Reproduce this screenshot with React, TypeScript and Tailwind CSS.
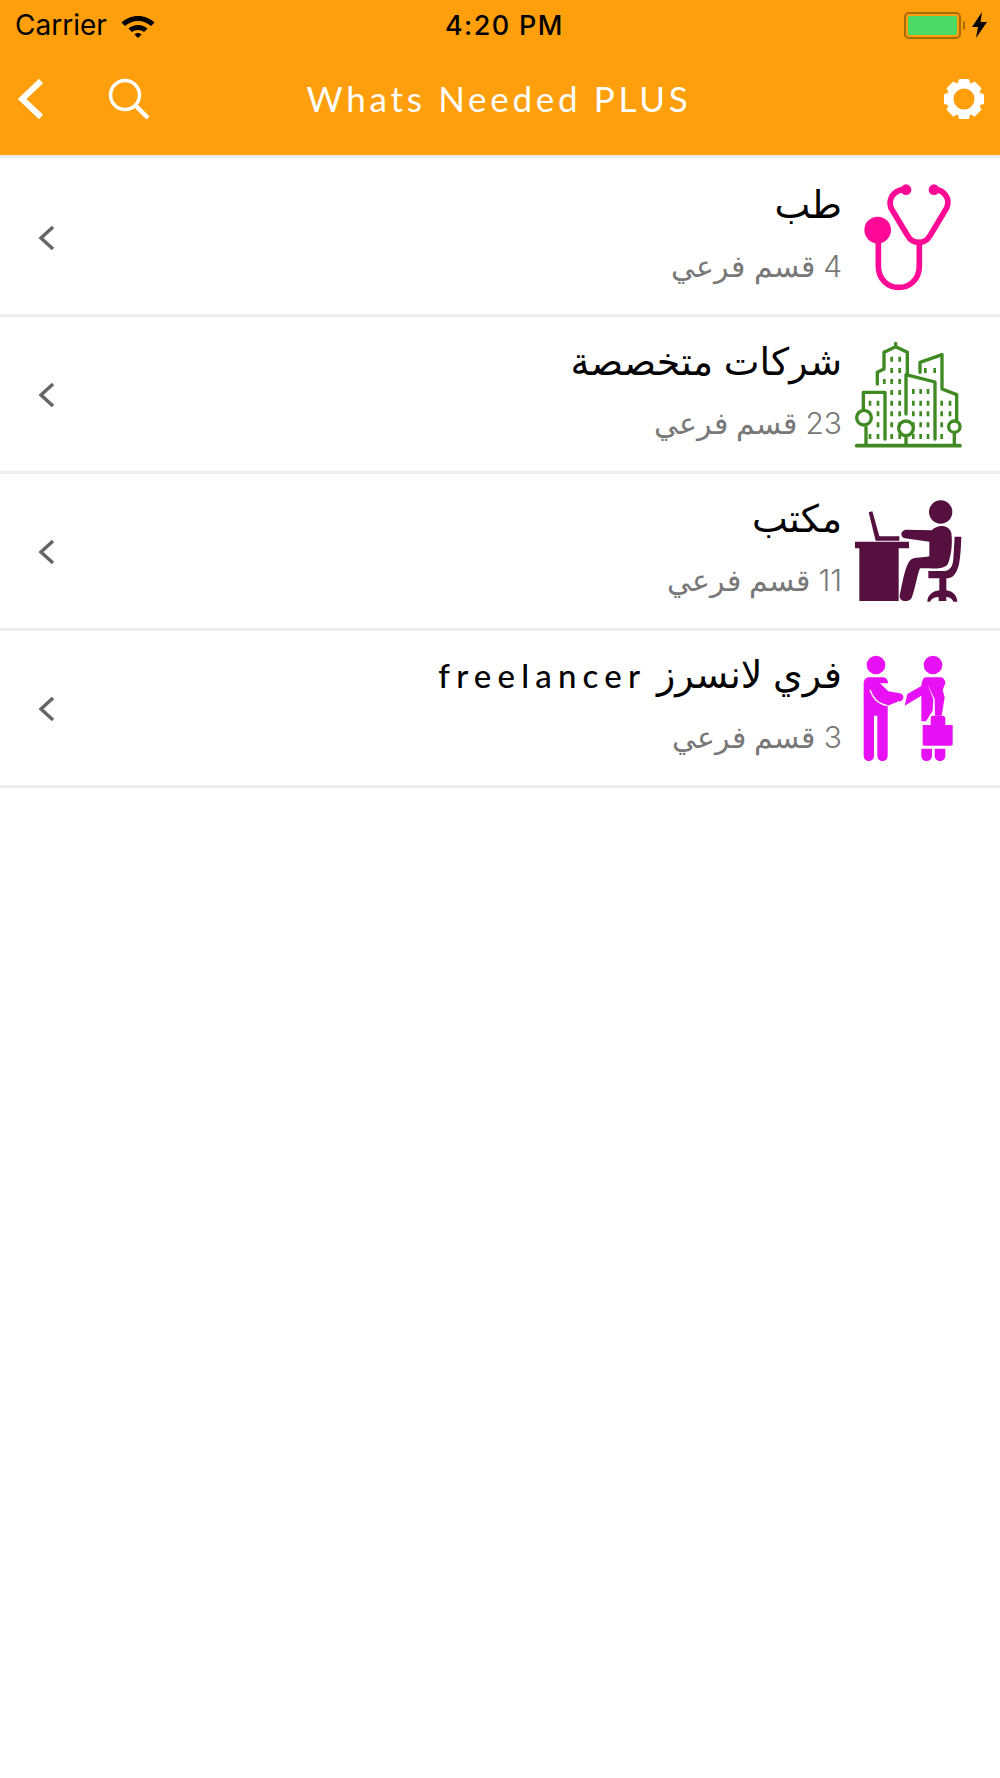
const rows = [
  { title: <>طب</>, sub: "4 قسم فرعي", icon: <Stethoscope /> },
  { title: <>شركات متخصصة</>, sub: "23 قسم فرعي", icon: <City /> },
  { title: <>مكتب</>, sub: "11 قسم فرعي", icon: <Desk /> },
  {
    title: (
      <>
        فري لانسرز <span className="font-['Lato',sans-serif] text-[33px] font-medium tracking-[6.2px]">freelancer</span>
      </>
    ),
    sub: "3 قسم فرعي",
    icon: <Handshake />,
  },
];

function Stethoscope() {
  return (
    <svg viewBox="102 37 324 324" className="h-[108px] w-[108px]" fill="none" stroke="#ff0a96" strokeWidth="17" strokeLinecap="round">
      <path d="M250 56C222 60 203 84 213 112L263 195C278 222 315 222 330 195L380 112C392 84 372 60 348 56" />
      <path d="M298 216V285C298 372 175 372 175 285V190" />
      <circle cx="258" cy="57" r="16" fill="#ff0a96" stroke="none" />
      <circle cx="342" cy="57" r="16" fill="#ff0a96" stroke="none" />
      <circle cx="173" cy="178" r="40" fill="#ff0a96" stroke="none" />
    </svg>
  );
}

function City() {
  const dots: string[] = [];
  const add = (xs: number[], ys: number[]) => {
    xs.forEach((x) => ys.forEach((y) => dots.push(`M${x} ${y}v15`)));
  };
  add([215, 239], [558, 592, 625, 658, 690, 722, 755]);
  add([193], [625]);
  add([316, 344], [592]);
  add([280, 302, 324], [655, 690, 722, 755, 790]);
  add([150, 174], [690]);
  add([174], [722, 755, 790]);
  add([150], [790]);
  add([365, 390], [690, 722]);
  add([365], [755, 790]);
  add([215, 239], [790]);
  return (
    <svg viewBox="102 508 324 324" className="h-[108px] w-[108px]" fill="none" stroke="#3f8a22" strokeWidth="10" strokeLinecap="round" strokeLinejoin="round">
      <path d="M227 518V528L262 545V610M227 528L192 545V595L172 605V640" />
      <path d="M300 605V575L366 552V655L410 672V750" />
      <path d="M258 730V612L345 634V805" />
      <path d="M130 715V665H195V805" />
      <path d="M138 770V822M258 795V822M403 785V822" />
      <circle cx="132" cy="741" r="22" />
      <circle cx="258" cy="773" r="22" />
      <circle cx="403" cy="768" r="17" />
      <path d="M110 825H420" strokeWidth="11" />
      <path d={dots.join("")} strokeWidth="8" strokeLinecap="butt" />
    </svg>
  );
}

function Desk() {
  return (
    <svg viewBox="102 50 324 324" className="h-[108px] w-[108px]" fill="#551040">
      <circle cx="362" cy="95" r="35" />
      <path d="M105 184H267V204H236V362H118V204H105Z" />
      <path d="M146 96L157 93L178 168H238V181H167Z" />
      <path d="M258 148L335 150C350 132 388 130 394 158C398 190 394 225 384 250C372 268 345 264 300 264C292 280 285 330 275 352C268 368 232 366 240 340C248 305 255 255 272 238C285 230 310 232 328 228V184L255 174C240 170 240 150 258 148Z" />
      <path d="M404 169H424C422 220 420 262 405 280C398 292 385 294 379 294V330C396 332 410 342 412 364H400C395 352 385 350 379 350V362H356V350C345 350 335 354 330 364H322C322 344 340 332 358 330V294H325V272H375C392 268 398 258 400 235Z" />
    </svg>
  );
}

function Handshake() {
  return (
    <svg viewBox="102 520 324 324" className="h-[108px] w-[108px]" fill="#e810f5">
      <circle cx="168" cy="553" r="28" />
      <circle cx="339" cy="553" r="28" />
      <path d="M148 590H188C198 590 204 598 204 608L180 608L205 632L240 638C256 642 252 664 236 662L203 675V825C203 846 172 846 172 825V705H162V825C162 846 131 846 131 825V608C131 598 138 590 148 590Z" />
      <path d="M150 628C158 650 170 668 203 675" fill="none" stroke="white" strokeWidth="4" />
      <path d="M318 590H360C370 590 376 598 376 608L368 628L374 650L365 705H345L344 655L322 610L340 655L338 690L318 722H304V645L254 675L262 640L304 616C306 600 310 590 318 590Z" />
      <path d="M332 735V712C332 706 336 705 340 705H368C372 705 376 708 376 712V733H398V790C398 794 396 795 392 795H314C310 795 308 794 308 790V733H344V722H364V733" />
      <path d="M304 804H336V825C336 846 304 846 304 825ZM344 804H376V825C376 846 344 846 344 825Z" />
    </svg>
  );
}

function Gear() {
  const angles = [0, 45, 90, 135, 180, 225, 270, 315];
  return (
    <svg viewBox="0 0 40 40" className="h-10 w-10" fill="white">
      <circle cx="20" cy="20" r="14" fill="none" stroke="white" strokeWidth="7" />
      {angles.map((a) => (
        <rect key={a} x="14.500" y="0" width="11" height="6" rx="1.500" transform={`rotate(${a} 20 20)`} />
      ))}
    </svg>
  );
}

export default function App() {
  return (
    <div className="min-h-[1778px] bg-white font-['Inter','DejaVu_Sans',sans-serif]">
      <header className="h-[155px] bg-[#ff9f0c]">
        <div className="flex h-[50px] items-center justify-between pl-[15px] pr-3 text-black">
          <div className="flex items-center gap-[14px]">
            <span className="text-[28px] leading-none">Carrier</span>
            <svg viewBox="0 0 34 25" className="h-[25px] w-[34px]" fill="black">
              <path d="M17 3C10.500 3 5 5.500 .5 9.500L4 13C7.500 10 12 8 17 8S26.500 10 30 13L33.500 9.500C29 5.500 23.500 3 17 3Z" />
              <path d="M17 12C13.500 12 10 13.500 7.500 15.500L11 19C12.500 17.800 14.500 17 17 17S21.500 17.800 23 19L26.500 15.500C24 13.500 20.500 12 17 12Z" />
              <path d="M17 20C15.500 20 14.500 20.500 13.500 21.500L17 25L20.500 21.500C19.500 20.500 18.500 20 17 20Z" />
            </svg>
          </div>
          <span className="mr-[50px] text-[27px] leading-none font-medium tracking-[1.4px]">4:20 PM</span>
          <div className="flex items-center gap-[7px]">
            <div className="flex items-center">
              <div className="flex h-[27px] w-[57px] rounded-[5px] border-[2px] border-[#a96a08] p-[2px]">
                <div className="h-full w-full rounded-[2px] bg-[#4cd964]" />
              </div>
              <div className="ml-[2px] h-[9px] w-[2px] rounded-r-full bg-[#a96a08]" />
            </div>
            <svg viewBox="0 0 16 26" className="h-[26px] w-4" fill="black">
              <path d="M10 0L0 15H6L4 26L15 10H8.500Z" />
            </svg>
          </div>
        </div>
        <div className="flex h-[105px] items-center justify-between pb-[8px] pl-[18px] pr-[16px] text-white">
          <div className="flex items-center gap-[64px]">
            <svg viewBox="0 0 26 40" className="h-[40px] w-[26px]" fill="none" stroke="white" strokeWidth="6">
              <path d="M23 2L4 20L23 38" />
            </svg>
            <svg viewBox="0 0 42 42" className="h-[42px] w-[42px]" fill="none" stroke="white" strokeWidth="3.500">
              <circle cx="17" cy="17" r="14.500" />
              <path d="M27.500 27.500L40 40" strokeWidth="4.500" />
            </svg>
          </div>
          <h1 className="mr-[96px] font-['Lato',sans-serif] text-[35px] leading-none font-normal tracking-[3.7px]">Whats Needed PLUS</h1>
          <Gear />
        </div>
      </header>
      <div className="h-[3px] bg-[#ececec]" />
      <main className="pt-[2px]">
        {rows.map((row) => (
          <div key={row.sub} className="flex h-[157px] items-center border-b-[3px] border-[#eeeeee] pl-[37px] pr-[38px]">
            <svg viewBox="0 0 18 26" className="mt-[2px] h-[26px] w-[18px]" fill="none" stroke="#666666" strokeWidth="3.500">
              <path d="M16 2L4 13L16 24" />
            </svg>
            <div dir="rtl" className="flex min-w-0 flex-1 flex-col items-start pb-[11px] text-right">
              <span className="text-[38px] leading-[50px] text-black">{row.title}</span>
              <span className="mt-[18px] text-[30px] leading-[38px] font-light text-[#777777]">{row.sub}</span>
            </div>
            <div className="ml-[12px] shrink-0">{row.icon}</div>
          </div>
        ))}
      </main>
    </div>
  );
}
